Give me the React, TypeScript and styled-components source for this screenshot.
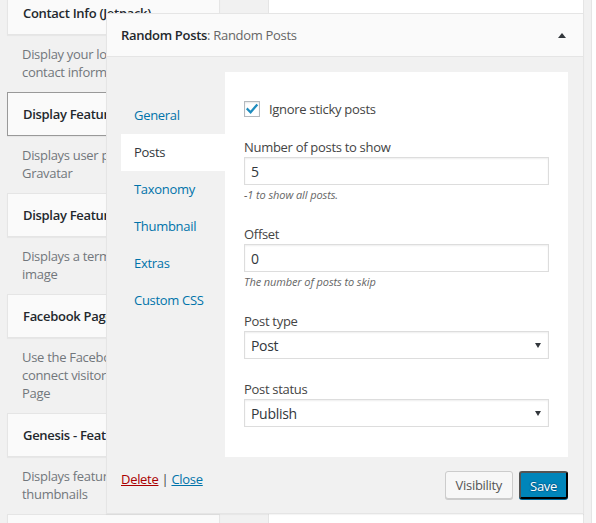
import React from "react";
import styled, { createGlobalStyle } from "styled-components";

const GlobalStyle = createGlobalStyle`
  * { box-sizing: border-box; }
  html, body {
    margin: 0;
    padding: 0;
    background: #f1f1f1;
  }
  body {
    font-family: "Open Sans", "Noto Sans", sans-serif;
    font-size: 13px;
    letter-spacing: -0.3px;
    color: #444;
  }
`;

const Screen = styled.div`
  position: relative;
  width: 596px;
  height: 523px;
  overflow: hidden;
  display: flex;
  align-items: flex-start;
  padding-left: 7px;
`;

/* ---- available widgets (left column) ---- */

const AvailableList = styled.div`
  width: 213px;
  margin-top: -9px;
  display: flex;
  flex-direction: column;
  flex-shrink: 0;
`;

const WidgetCard = styled.div<{ $hover?: boolean }>`
  height: 44px;
  background: #fafafa;
  border: 1px solid ${(p) => (p.$hover ? "#999" : "#e5e5e5")};
  box-shadow: 0 1px 1px rgba(0, 0, 0, 0.04);
  display: flex;
  align-items: center;
  padding: 0 15px;
  font-weight: 600;
  color: #23282d;
  white-space: nowrap;
`;

const WidgetDescription = styled.div`
  padding: 10px 15px 11px 15px;
  line-height: 18px;
  color: #72777c;
  white-space: nowrap;

  span {
    display: block;
  }
`;

/* ---- sidebars ---- */

const SidebarHolder = styled.div`
  width: 316px;
  height: 560px;
  margin-top: -9px;
  margin-left: 48px;
  flex-shrink: 0;
  background: #fff;
  border: 1px solid #e5e5e5;
`;

const NextSidebar = styled.div`
  flex: 1;
  height: 560px;
  margin-top: -9px;
  margin-left: 7px;
  background: #fff;
  border-left: 1px solid #e5e5e5;
`;

/* ---- the open widget, expanded over the left column ---- */

const OpenWidget = styled.div`
  position: absolute;
  left: 106px;
  top: 13px;
  width: 478px;
  background: #f1f1f1;
  border: 1px solid #e5e5e5;
  box-shadow: 0 1px 1px rgba(0, 0, 0, 0.04);
`;

const WidgetHeader = styled.div`
  height: 43px;
  background: #fafafa;
  border-bottom: 1px solid #e5e5e5;
  display: flex;
  align-items: center;
  justify-content: space-between;
  padding: 0 17px 0 14px;
`;

const WidgetTitle = styled.h3`
  margin: 0;
  font-size: 13px;
  font-weight: 600;
  color: #23282d;
`;

const InTitle = styled.span`
  font-weight: 400;
  color: #666;
`;

const WidgetBody = styled.div`
  padding: 15px 15px 14px 14px;
`;

const Main = styled.div`
  display: flex;
  align-items: flex-start;
`;

const TabList = styled.ul`
  list-style: none;
  margin: 25px 0 0 0;
  padding: 0;
  width: 104px;
  flex-shrink: 0;
`;

const Tab = styled.li<{ $active?: boolean }>`
  height: 37px;
  line-height: 37px;
  padding-left: 13px;
  color: ${(p) => (p.$active ? "#32373c" : "#0073aa")};
  background: ${(p) => (p.$active ? "#fff" : "transparent")};
`;

const Panel = styled.div`
  flex: 1;
  background: #fff;
  padding: 28px 19px 30px 19px;
`;

const CheckRow = styled.label`
  display: flex;
  align-items: center;
  gap: 9px;
  height: 18px;
  margin-bottom: 20px;
  color: #444;
`;

const CheckBox = styled.span`
  width: 16px;
  height: 16px;
  border: 1px solid #b4b9be;
  background: #fff;
  box-shadow: inset 0 1px 2px rgba(0, 0, 0, 0.1);
  display: flex;
  align-items: center;
  justify-content: center;
`;

const Fields = styled.div`
  display: flex;
  flex-direction: column;
  gap: 21px;
`;

const Field = styled.div``;

const FieldLabel = styled.label`
  display: block;
  line-height: 18px;
  color: #444;
`;

const TextInput = styled.input`
  display: block;
  width: 100%;
  height: 28px;
  margin: 1px 0 0 0;
  padding: 0 6px;
  border: 1px solid #ddd;
  border-radius: 0;
  box-shadow: inset 0 1px 2px rgba(0, 0, 0, 0.07);
  background: #fff;
  font-family: inherit;
  font-size: 14px;
  letter-spacing: -0.3px;
  color: #32373c;
  outline: none;
`;

const SelectBox = styled.div`
  display: flex;
  align-items: center;
  justify-content: space-between;
  height: 28px;
  margin-top: 1px;
  padding: 0 7px 0 6px;
  border: 1px solid #ddd;
  box-shadow: inset 0 1px 2px rgba(0, 0, 0, 0.07);
  background: #fff;
  font-size: 14px;
  color: #32373c;
`;

const Hint = styled.p`
  margin: 1px 0 0 0;
  line-height: 18px;
  font-size: 11px;
  font-style: italic;
  color: #666;
  letter-spacing: -0.1px;
`;

const Footer = styled.div`
  display: flex;
  justify-content: space-between;
  align-items: flex-start;
  margin-top: 14px;
`;

const Links = styled.div`
  line-height: 16px;
  color: #444;
`;

const DeleteLink = styled.a`
  color: #a00;
  text-decoration: underline;
`;

const CloseLink = styled.a`
  color: #0073aa;
  text-decoration: underline;
`;

const Buttons = styled.div`
  display: flex;
  gap: 6px;
`;

const Button = styled.button<{ $primary?: boolean }>`
  height: 28px;
  padding: ${(p) => (p.$primary ? "0 9px 1px" : "0 10px 1px")};
  border-radius: 3px;
  font-family: inherit;
  font-size: 13px;
  letter-spacing: -0.3px;
  line-height: 26px;
  cursor: pointer;
  border: 1px solid ${(p) => (p.$primary ? "#0073aa #006799 #006799" : "#ccc")};
  background: ${(p) => (p.$primary ? "#0085ba" : "#f7f7f7")};
  box-shadow: 0 1px 0 ${(p) => (p.$primary ? "#006799" : "#ccc")};
  color: ${(p) => (p.$primary ? "#fff" : "#555")};
  text-shadow: ${(p) =>
    p.$primary
      ? "0 -1px 1px #006799, 1px 0 1px #006799, 0 1px 1px #006799, -1px 0 1px #006799"
      : "none"};
`;

const CaretUp = () => (
  <svg width="8" height="5" viewBox="0 0 8 5" aria-hidden="true">
    <path d="M0 5 L4 0 L8 5 Z" fill="#32373c" />
  </svg>
);

const CaretDown = () => (
  <svg width="6" height="5" viewBox="0 0 6 5" aria-hidden="true">
    <path d="M0 0 L6 0 L3 5 Z" fill="#32373c" />
  </svg>
);

const CheckMark = () => (
  <svg width="14" height="14" viewBox="0 0 14 14" aria-hidden="true">
    <path
      d="M2.6 7.2 L5.6 10.2 L11.6 3.4"
      fill="none"
      stroke="#1e8cbe"
      strokeWidth="2.3"
      strokeLinecap="square"
    />
  </svg>
);

type Available = {
  title: string;
  lines: string[];
  hover?: boolean;
};

const available: Available[] = [
  {
    title: "Contact Info (Jetpack)",
    lines: ["Display your location, hours, and", "contact information."],
  },
  {
    title: "Display Featured Author Image",
    lines: ["Displays user profile image from", "Gravatar"],
    hover: true,
  },
  {
    title: "Display Featured Term Image",
    lines: ["Displays a term featured", "image"],
  },
  {
    title: "Facebook Page Plugin",
    lines: ["Use the Facebook Page Plugin to", "connect visitors to your Facebook", "Page"],
  },
  {
    title: "Genesis - Featured Posts",
    lines: ["Displays featured posts with", "thumbnails"],
  },
  { title: "", lines: [] },
];

const tabs = ["General", "Posts", "Taxonomy", "Thumbnail", "Extras", "Custom CSS"];

export default function App() {
  return (
    <>
      <GlobalStyle />
      <Screen>
        <AvailableList>
          {available.map((w, i) => (
            <React.Fragment key={i}>
              <WidgetCard $hover={w.hover}>{w.title}</WidgetCard>
              {w.lines.length > 0 && (
                <WidgetDescription>
                  {w.lines.map((l) => (
                    <span key={l}>{l}</span>
                  ))}
                </WidgetDescription>
              )}
            </React.Fragment>
          ))}
        </AvailableList>
        <SidebarHolder />
        <NextSidebar />

        <OpenWidget>
          <WidgetHeader>
            <WidgetTitle>
              Random Posts<InTitle>: Random Posts</InTitle>
            </WidgetTitle>
            <CaretUp />
          </WidgetHeader>
          <WidgetBody>
            <Main>
              <TabList>
                {tabs.map((t) => (
                  <Tab key={t} $active={t === "Posts"}>
                    {t}
                  </Tab>
                ))}
              </TabList>
              <Panel>
                <CheckRow>
                  <CheckBox>
                    <CheckMark />
                  </CheckBox>
                  Ignore sticky posts
                </CheckRow>
                <Fields>
                  <Field>
                    <FieldLabel>Number of posts to show</FieldLabel>
                    <TextInput defaultValue="5" />
                    <Hint>-1 to show all posts.</Hint>
                  </Field>
                  <Field>
                    <FieldLabel>Offset</FieldLabel>
                    <TextInput defaultValue="0" />
                    <Hint>The number of posts to skip</Hint>
                  </Field>
                  <Field>
                    <FieldLabel>Post type</FieldLabel>
                    <SelectBox>
                      <span>Post</span>
                      <CaretDown />
                    </SelectBox>
                  </Field>
                  <Field>
                    <FieldLabel>Post status</FieldLabel>
                    <SelectBox>
                      <span>Publish</span>
                      <CaretDown />
                    </SelectBox>
                  </Field>
                </Fields>
              </Panel>
            </Main>
            <Footer>
              <Links>
                <DeleteLink href="#delete">Delete</DeleteLink> | <CloseLink href="#close">Close</CloseLink>
              </Links>
              <Buttons>
                <Button>Visibility</Button>
                <Button $primary>Save</Button>
              </Buttons>
            </Footer>
          </WidgetBody>
        </OpenWidget>
      </Screen>
    </>
  );
}
